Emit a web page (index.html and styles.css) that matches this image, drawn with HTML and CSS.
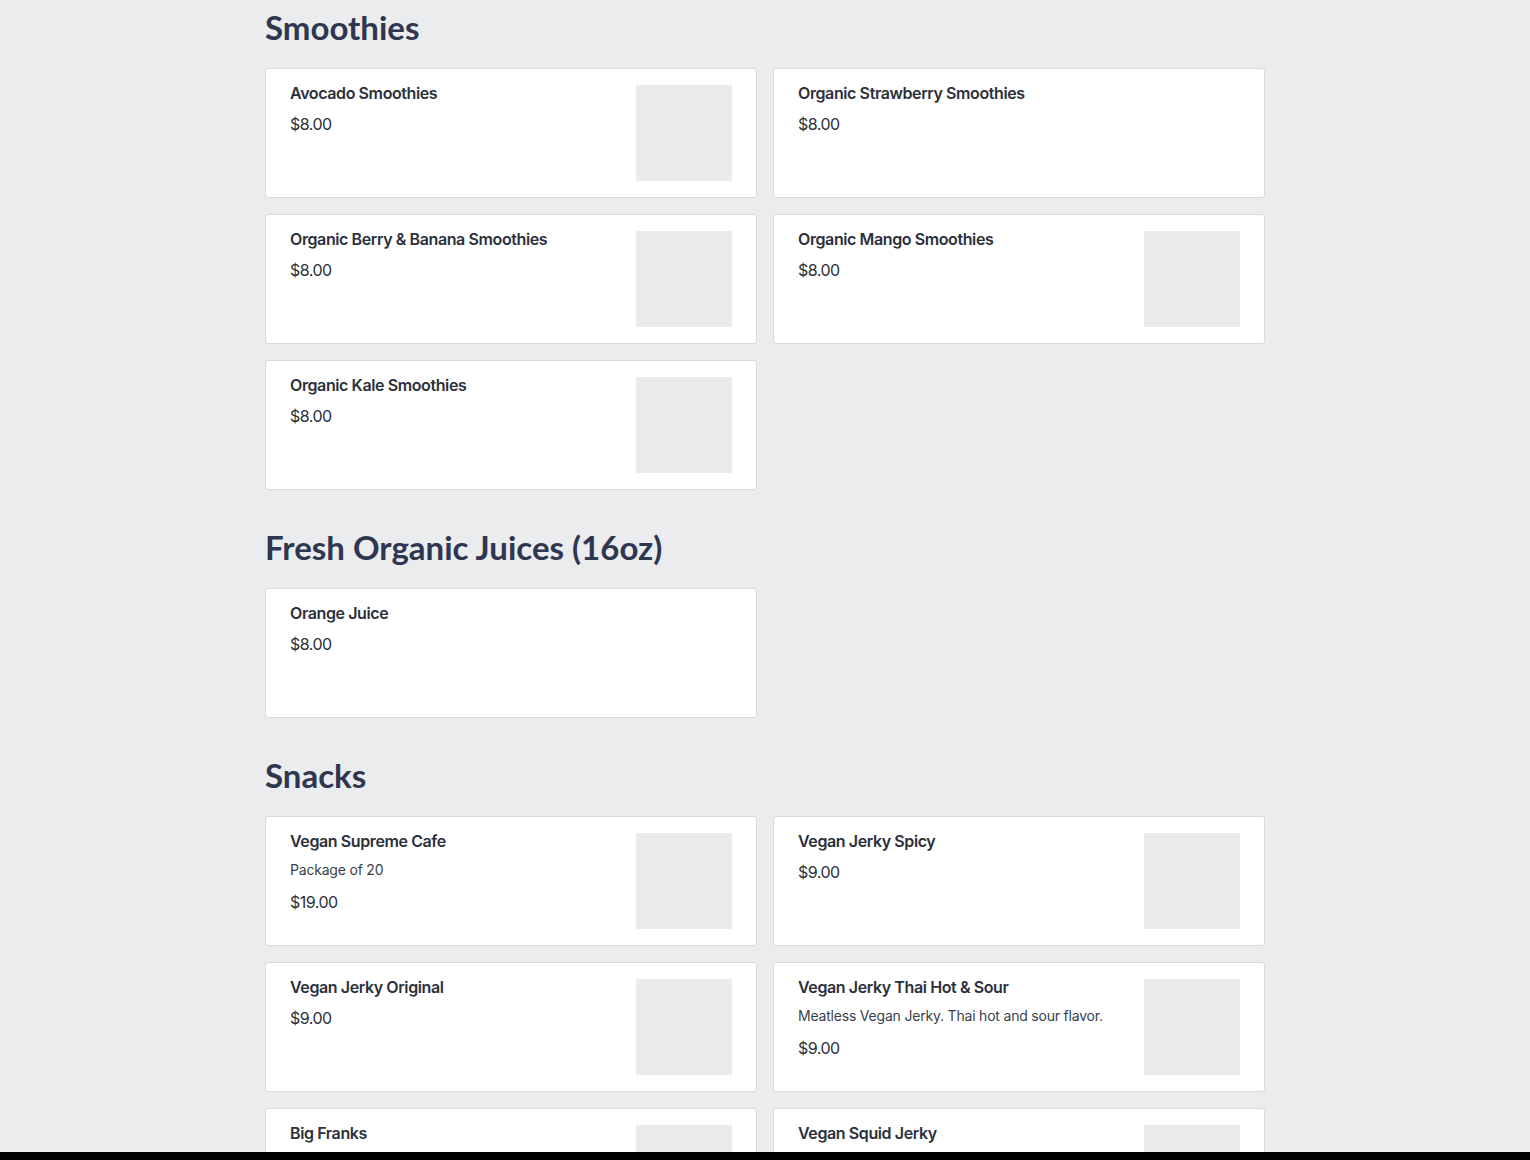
FILE: index.html
```html
<!DOCTYPE html>
<html lang="en">
<head>
<meta charset="utf-8">
<title>Menu</title>
<link rel="stylesheet" href="styles.css">
</head>
<body>
<main class="menu">
  <section class="category">
    <h2 class="category-title">Smoothies</h2>
    <div class="grid">
      <div class="item">
        <div class="item-info"><div class="item-name">Avocado Smoothies</div><div class="item-price">$8.00</div></div>
        <div class="item-img"></div>
      </div>
      <div class="item">
        <div class="item-info"><div class="item-name">Organic Strawberry Smoothies</div><div class="item-price">$8.00</div></div>
      </div>
      <div class="item">
        <div class="item-info"><div class="item-name">Organic Berry &amp; Banana Smoothies</div><div class="item-price">$8.00</div></div>
        <div class="item-img"></div>
      </div>
      <div class="item">
        <div class="item-info"><div class="item-name">Organic Mango Smoothies</div><div class="item-price">$8.00</div></div>
        <div class="item-img"></div>
      </div>
      <div class="item">
        <div class="item-info"><div class="item-name">Organic Kale Smoothies</div><div class="item-price">$8.00</div></div>
        <div class="item-img"></div>
      </div>
    </div>
  </section>
  <section class="category">
    <h2 class="category-title">Fresh Organic Juices (16oz)</h2>
    <div class="grid">
      <div class="item">
        <div class="item-info"><div class="item-name">Orange Juice</div><div class="item-price">$8.00</div></div>
      </div>
    </div>
  </section>
  <section class="category">
    <h2 class="category-title">Snacks</h2>
    <div class="grid">
      <div class="item">
        <div class="item-info"><div class="item-name">Vegan Supreme Cafe</div><div class="item-desc">Package of 20</div><div class="item-price">$19.00</div></div>
        <div class="item-img"></div>
      </div>
      <div class="item">
        <div class="item-info"><div class="item-name">Vegan Jerky Spicy</div><div class="item-price">$9.00</div></div>
        <div class="item-img"></div>
      </div>
      <div class="item">
        <div class="item-info"><div class="item-name">Vegan Jerky Original</div><div class="item-price">$9.00</div></div>
        <div class="item-img"></div>
      </div>
      <div class="item">
        <div class="item-info"><div class="item-name">Vegan Jerky Thai Hot &amp; Sour</div><div class="item-desc">Meatless Vegan Jerky. Thai hot and sour flavor.</div><div class="item-price">$9.00</div></div>
        <div class="item-img"></div>
      </div>
      <div class="item">
        <div class="item-info"><div class="item-name">Big Franks</div><div class="item-price">$9.00</div></div>
        <div class="item-img"></div>
      </div>
      <div class="item">
        <div class="item-info"><div class="item-name">Vegan Squid Jerky</div><div class="item-price">$9.00</div></div>
        <div class="item-img"></div>
      </div>
    </div>
  </section>
</main>
<div class="bottom-bar"></div>
</body>
</html>
```
FILE: styles.css
```css
html, body {
  margin: 0;
  padding: 0;
  background: #ebecee;
}
body {
  font-family: Inter, "Noto Sans", "Liberation Sans", sans-serif;
  color: #2b303b;
  height: 1160px;
  overflow: hidden;
}
.menu {
  width: 1000px;
  margin: 0 auto;
  padding-top: 7px;
}
.category {
  margin-bottom: 37px;
}
.category-title {
  font-family: Lato, "Open Sans", sans-serif;
  font-weight: 700;
  font-size: 33px;
  line-height: 40px;
  color: #2e3650;
  margin: 0 0 21px;
}
.grid {
  display: grid;
  grid-template-columns: 1fr 1fr;
  gap: 16px;
}
.item {
  display: flex;
  justify-content: space-between;
  background: #fff;
  border: 1px solid #d9dadd;
  border-radius: 3px;
  padding: 16px 24px;
  height: 96px;
}
.item-info {
  display: flex;
  flex-direction: column;
}
.item-name {
  font-size: 16px;
  line-height: 16px;
  font-weight: 600;
  letter-spacing: -0.4px;
  color: #2b303b;
}
.item-desc {
  font-size: 14px;
  line-height: 18px;
  margin-top: 12px;
  letter-spacing: -0.2px;
  color: #3a3f49;
}
.item-price {
  font-size: 16px;
  line-height: 22px;
  margin-top: 12px;
  letter-spacing: -0.5px;
  color: #2b303b;
}
.item-img {
  width: 96px;
  height: 96px;
  background: #ebebeb;
  flex-shrink: 0;
}
.bottom-bar {
  position: fixed;
  left: 0;
  right: 0;
  bottom: 0;
  height: 8px;
  background: #000;
}
```
